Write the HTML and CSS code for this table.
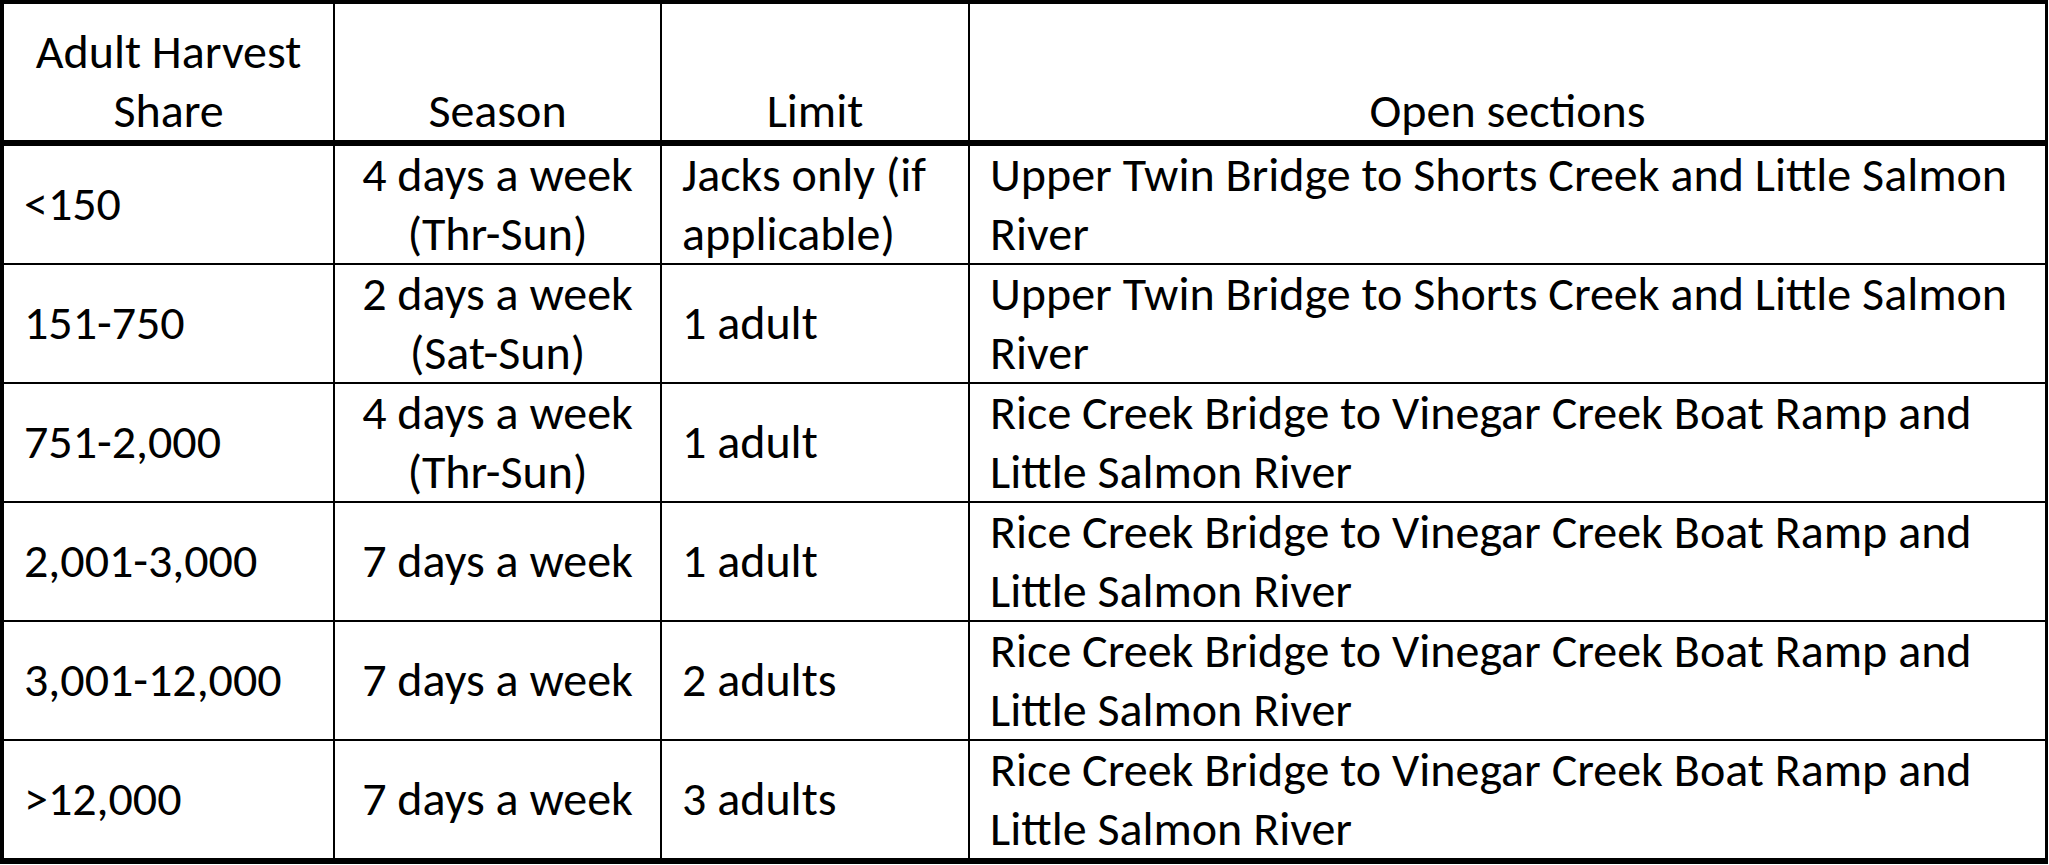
FILE: index.html
```html
<!DOCTYPE html>
<html lang="en">
<head>
<meta charset="utf-8">
<title>Adult Harvest Share</title>
<link rel="stylesheet" href="styles.css">
</head>
<body>
<div class="grid">
  <div class="cell head c-center">Adult Harvest<br>Share</div>
  <div class="cell head c-center">Season</div>
  <div class="cell head c-center">Limit</div>
  <div class="cell head c-center last">Open sections</div>

  <div class="cell first">&lt;150</div>
  <div class="cell first c-center">4 days a week<br>(Thr-Sun)</div>
  <div class="cell first">Jacks only (if<br>applicable)</div>
  <div class="cell first last">Upper Twin Bridge to Shorts Creek and Little Salmon<br>River</div>

  <div class="cell">151-750</div>
  <div class="cell c-center">2 days a week<br>(Sat-Sun)</div>
  <div class="cell">1 adult</div>
  <div class="cell last">Upper Twin Bridge to Shorts Creek and Little Salmon<br>River</div>

  <div class="cell">751-2,000</div>
  <div class="cell c-center">4 days a week<br>(Thr-Sun)</div>
  <div class="cell">1 adult</div>
  <div class="cell last">Rice Creek Bridge to Vinegar Creek Boat Ramp and<br>Little Salmon River</div>

  <div class="cell">2,001-3,000</div>
  <div class="cell c-center">7 days a week</div>
  <div class="cell">1 adult</div>
  <div class="cell last">Rice Creek Bridge to Vinegar Creek Boat Ramp and<br>Little Salmon River</div>

  <div class="cell">3,001-12,000</div>
  <div class="cell c-center">7 days a week</div>
  <div class="cell">2 adults</div>
  <div class="cell last">Rice Creek Bridge to Vinegar Creek Boat Ramp and<br>Little Salmon River</div>

  <div class="cell">&gt;12,000</div>
  <div class="cell c-center">7 days a week</div>
  <div class="cell">3 adults</div>
  <div class="cell last">Rice Creek Bridge to Vinegar Creek Boat Ramp and<br>Little Salmon River</div>
</div>
</body>
</html>
```

FILE: styles.css
```css
html, body {
  margin: 0;
  padding: 0;
  background: #ffffff;
}

body {
  font-family: Carlito, Lato, "Open Sans", sans-serif;
  font-size: 48px;
  line-height: 58.5px;
  color: #000000;
}

.grid {
  display: grid;
  grid-template-columns: 331px 327px 308px 1075px;
  grid-template-rows: 142px 117px repeat(5, 119px);
  width: max-content;
  border-top: 4px solid #000;
  border-left: 4px solid #000;
  border-right: 3px solid #000;
  border-bottom: 6px solid #000;
}

.cell {
  box-sizing: border-box;
  display: flex;
  flex-direction: column;
  justify-content: center;
  padding: 0 6px 0 20px;
  border-right: 2px solid #000;
  border-top: 2px solid #000;
  white-space: nowrap;
}

.cell.last {
  border-right: 0;
}

.cell.first {
  border-top: 0;
}

.cell.head {
  border-top: 0;
  border-bottom: 6px solid #000;
  justify-content: flex-end;
  padding: 0 2px 0;
}

.c-center {
  text-align: center;
  padding-left: 2px;
  padding-right: 2px;
}
```
